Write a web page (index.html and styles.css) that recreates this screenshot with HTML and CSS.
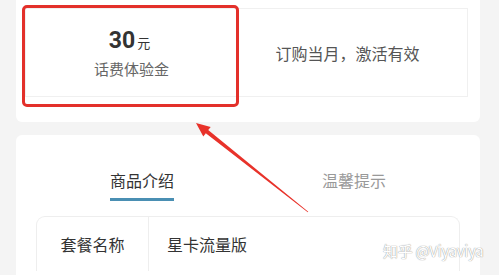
FILE: index.html
```html
<!DOCTYPE html>
<html lang="zh-CN">
<head>
<meta charset="utf-8">
<link rel="stylesheet" href="styles.css">
</head>
<body>
<div class="page">
  <section class="card top-card">
    <div class="cell cell-left">
      <div class="amount"><span class="num">30</span><span class="unit">元</span></div>
      <div class="label">话费体验金</div>
      <div class="mark-box"></div>
    </div>
    <div class="cell cell-right">订购当月，激活有效</div>
  </section>
  <section class="card detail-card">
    <div class="tabs">
      <div class="tab active"><span>商品介绍</span></div>
      <div class="tab"><span>温馨提示</span></div>
    </div>
    <div class="table">
      <div class="row">
        <div class="k">套餐名称</div>
        <div class="v">星卡流量版</div>
      </div>
    </div>
  </section>
</div>
<svg class="arrow" width="499" height="275" viewBox="0 0 499 275">
  <polygon points="196,123 210.7,127 208.2,130.1 308.25,211.7 307.75,212.3 205.8,133.3 203.3,136.4" fill="#e8322a"/>
</svg>
<div class="watermark">知乎 @Viyaviya</div>
</body>
</html>
```
FILE: styles.css
```css
html, body {
  margin: 0;
  padding: 0;
}
body {
  width: 499px;
  height: 275px;
  overflow: hidden;
  background: #f4f4f4;
  font-family: "Noto Sans CJK SC", "Noto Sans", sans-serif;
  position: relative;
}
.page {
  padding: 0 19px 0 16px;
  display: flex;
  flex-direction: column;
  gap: 13px;
}
.card {
  background: #fff;
}
.top-card {
  display: flex;
  padding: 8px 12px 25px 9px;
  border-radius: 0 0 6px 6px;
}
.cell {
  height: 89px;
  border: 1px solid #f0f0f0;
  box-sizing: border-box;
  display: flex;
  flex-direction: column;
  align-items: center;
  justify-content: center;
}
.cell-left {
  width: 212px;
  position: relative;
  border-right: none;
}
.cell-right {
  flex: 1;
  font-size: 16px;
  color: #555;
  padding-right: 10px;
}
.amount {
  display: flex;
  align-items: baseline;
  color: #333;
  line-height: 24px;
  margin-top: 3px;
  margin-left: -4px;
}
.num {
  font-family: "Roboto", "Noto Sans", sans-serif;
  font-weight: 700;
  font-size: 23px;
}
.unit {
  font-size: 13px;
  margin-left: 2px;
}
.label {
  font-size: 15px;
  color: #666;
  line-height: 22px;
  margin-top: 3px;
}
.mark-box {
  position: absolute;
  left: -4px;
  top: -4px;
  width: 217px;
  height: 102px;
  border: 3px solid #e3302a;
  border-radius: 5px;
  box-sizing: border-box;
}
.detail-card {
  height: 106px;
  padding: 34px 20px 0 20px;
  border-radius: 6px 6px 0 0;
}
.tabs {
  display: flex;
}
.tab {
  flex: 1;
  display: flex;
  justify-content: center;
  font-size: 16px;
  line-height: 22px;
  color: #999;
}
.tab span {
  padding-bottom: 7px;
  border-bottom: 3px solid transparent;
}
.tab.active {
  color: #333;
}
.tab.active span {
  border-bottom-color: #4a8fb3;
}
.table {
  margin-top: 15px;
  border: 1px solid #eee;
  border-bottom: none;
  border-radius: 9px 9px 0 0;
  height: 54px;
}
.row {
  display: flex;
  height: 54px;
  align-items: stretch;
}
.k {
  width: 111px;
  border-right: 1px solid #eee;
  display: flex;
  align-items: center;
  justify-content: center;
  font-size: 16px;
  color: #333;
}
.v {
  display: flex;
  align-items: center;
  padding-left: 18px;
  font-size: 16px;
  color: #333;
}
.arrow {
  position: absolute;
  left: 0;
  top: 0;
}
.watermark {
  position: absolute;
  left: 383px;
  top: 240px;
  font-size: 15px;
  line-height: 22px;
  color: #fff;
  text-shadow: 0 0 1px #999, 0 0 1px #aaa;
  white-space: nowrap;
  letter-spacing: -0.3px;
}
```
